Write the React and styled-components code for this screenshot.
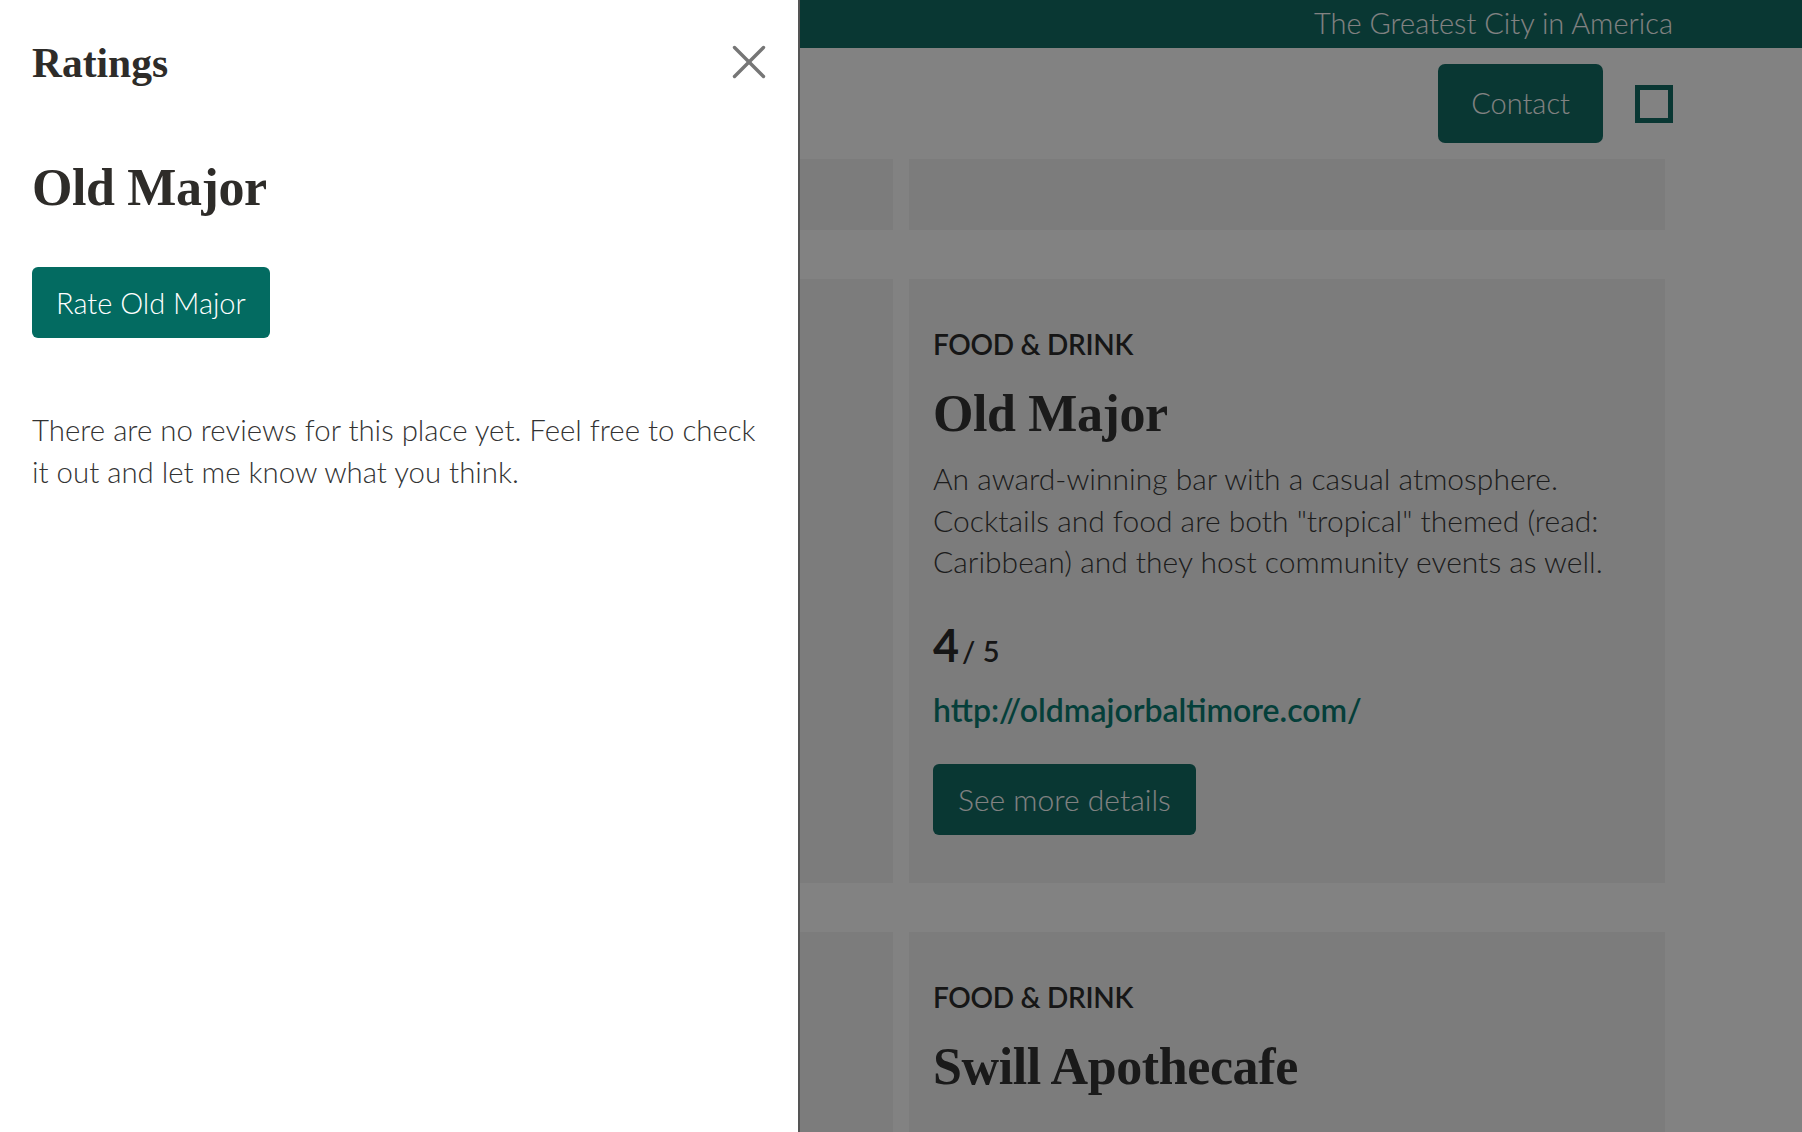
import React from 'react';
import styled, { createGlobalStyle } from 'styled-components';

const GlobalStyle = createGlobalStyle`
  html, body {
    margin: 0;
    padding: 0;
    overflow: hidden;
    background: #fff;
  }
  body {
    font-family: "Lato", "Liberation Sans", sans-serif;
    color: #333;
  }
  * {
    box-sizing: border-box;
  }
`;

const sans = `"Lato", "Liberation Sans", sans-serif`;
const serif = `"Liberation Serif", "Times New Roman", serif`;

/* ---------- page behind the drawer ---------- */

const Page = styled.div`
  min-height: 100vh;
  background: #fff;
`;

const TopBar = styled.div`
  height: 48px;
  background: #126c65;
  display: flex;
  align-items: center;
  justify-content: flex-end;
  padding: 0 129px 3px;
`;

const Tagline = styled.span`
  font-family: ${sans};
  font-weight: 300;
  font-size: 29px;
  color: #fff;
`;

const Nav = styled.nav`
  display: flex;
  align-items: center;
  justify-content: flex-end;
  gap: 32px;
  padding: 16px 129px 0;
`;

const NavButton = styled.a`
  display: inline-block;
  font-family: ${sans};
  font-weight: 300;
  font-size: 29px;
  line-height: 45px;
  padding: 16px 33px 18px;
  color: #fff;
  background: #126c65;
  border-radius: 7px;
  text-decoration: none;
`;

const MenuBox = styled.span`
  display: block;
  width: 38px;
  height: 38px;
  border: 5px solid #126c65;
`;

const Grid = styled.main`
  display: grid;
  grid-template-columns: 1fr 1fr;
  column-gap: 16px;
  row-gap: 49px;
  padding: 16px 137px 0;
`;

const Card = styled.article`
  background: #f4f4f4;
  min-height: ${(p) => (p.$short ? '71px' : '0')};
  padding: ${(p) => (p.$short ? '0' : '48px 24px 48px')};
`;

const Category = styled.div`
  font-family: ${sans};
  font-weight: 600;
  font-size: 28px;
  line-height: 35px;
  letter-spacing: -0.3px;
  color: #2c2c2c;
  text-transform: uppercase;
`;

const CardTitle = styled.h3`
  font-family: ${serif};
  font-weight: 700;
  font-size: 52px;
  line-height: 1.2;
  letter-spacing: -0.4px;
  color: #333;
  margin: 21px 0 0;
`;

const Description = styled.p`
  font-family: ${sans};
  font-weight: 300;
  font-size: 30px;
  line-height: 41.5px;
  color: #3a3a3a;
  margin: 13px 0 0;
`;

const Rating = styled.div`
  font-family: ${sans};
  margin-top: 35px;
  line-height: 54px;
  color: #2c2c2c;
`;

const Score = styled.span`
  font-size: 45px;
  font-weight: 700;
`;

const OutOf = styled.span`
  font-size: 29px;
  font-weight: 600;
  margin-left: 3px;
`;

const Website = styled.a`
  display: block;
  margin-top: 6px;
  font-family: ${sans};
  font-weight: 600;
  font-size: 32px;
  line-height: 41.5px;
  color: #0b7d73;
  text-decoration: none;
`;

const Button = styled.button`
  display: inline-block;
  border: none;
  cursor: pointer;
  font-family: ${sans};
  font-weight: 300;
  font-size: ${(p) => p.$size || '30px'};
  line-height: 45px;
  padding: 13px ${(p) => p.$px || '25px'};
  border-radius: 6px;
  color: #fff;
  background: ${(p) => p.$bg || '#036b61'};
  margin-top: ${(p) => p.$mt || '0'};
`;

/* ---------- overlay + drawer ---------- */

const Backdrop = styled.div`
  position: fixed;
  inset: 0;
  background: rgba(0, 0, 0, 0.49);
`;

const Drawer = styled.aside`
  position: fixed;
  top: 0;
  left: 0;
  bottom: 0;
  width: 800px;
  background: #fff;
  border-right: 2px solid #555;
  padding: 40px 32px;
`;

const DrawerHeader = styled.div`
  display: flex;
  align-items: center;
  justify-content: space-between;
  margin-top: -1px;
`;

const DrawerTitle = styled.h1`
  font-family: ${serif};
  font-weight: 700;
  font-size: 41.5px;
  line-height: 48px;
  color: #2e2c29;
  margin: 0;
`;

const CloseButton = styled.button`
  display: flex;
  background: none;
  border: none;
  padding: 0;
  margin-top: -3px;
  cursor: pointer;
`;

const PlaceName = styled.h2`
  font-family: ${serif};
  font-weight: 700;
  font-size: 52px;
  line-height: 1.2;
  letter-spacing: -0.4px;
  color: #2e2c29;
  margin: 70px 0 48px;
`;

const Note = styled.p`
  font-family: ${sans};
  font-weight: 300;
  font-size: 29.4px;
  line-height: 41.5px;
  color: #333;
  margin: 71px 0 0;
`;

const places = [
  {
    id: 'old-major',
    category: 'Food & Drink',
    name: 'Old Major',
    description:
      'An award-winning bar with a casual atmosphere. Cocktails and food are both "tropical" themed (read: Caribbean) and they host community events as well.',
    rating: 4,
    url: 'http://oldmajorbaltimore.com/',
  },
  {
    id: 'swill',
    category: 'Food & Drink',
    name: 'Swill Apothecafe',
    rating: 5,
    url: 'http://swillapothecafe.com/',
  },
];

function PlaceCard({ place }) {
  return (
    <Card>
      <Category>{place.category}</Category>
      <CardTitle>{place.name}</CardTitle>
      {place.description && <Description>{place.description}</Description>}
      <Rating>
        <Score>{place.rating}</Score>
        <OutOf>/ 5</OutOf>
      </Rating>
      <Website href={place.url}>{place.url}</Website>
      <Button $bg="#126c65" $mt="34px">See more details</Button>
    </Card>
  );
}

function CloseIcon() {
  return (
    <svg width="34" height="34" viewBox="0 0 34 34" fill="none">
      <line x1="2.5" y1="2.5" x2="31.5" y2="31.5" stroke="#767676" strokeWidth="3.4" strokeLinecap="round" />
      <line x1="31.5" y1="2.5" x2="2.5" y2="31.5" stroke="#767676" strokeWidth="3.4" strokeLinecap="round" />
    </svg>
  );
}

export default function App() {
  return (
    <>
      <GlobalStyle />
      <Page>
        <TopBar>
          <Tagline>The Greatest City in America</Tagline>
        </TopBar>
        <Nav>
          <NavButton href="#contact">Contact</NavButton>
          <MenuBox />
        </Nav>
        <Grid>
          <Card $short />
          <Card $short />
          {places.map((p) => (
            <React.Fragment key={p.id}>
              <Card />
              <PlaceCard place={p} />
            </React.Fragment>
          ))}
        </Grid>
      </Page>

      <Backdrop />
      <Drawer>
        <DrawerHeader>
          <DrawerTitle>Ratings</DrawerTitle>
          <CloseButton aria-label="Close">
            <CloseIcon />
          </CloseButton>
        </DrawerHeader>
        <PlaceName>Old Major</PlaceName>
        <Button $size="29px" $px="24px">Rate Old Major</Button>
        <Note>
          There are no reviews for this place yet. Feel free to check it out and let me know what you think.
        </Note>
      </Drawer>
    </>
  );
}
